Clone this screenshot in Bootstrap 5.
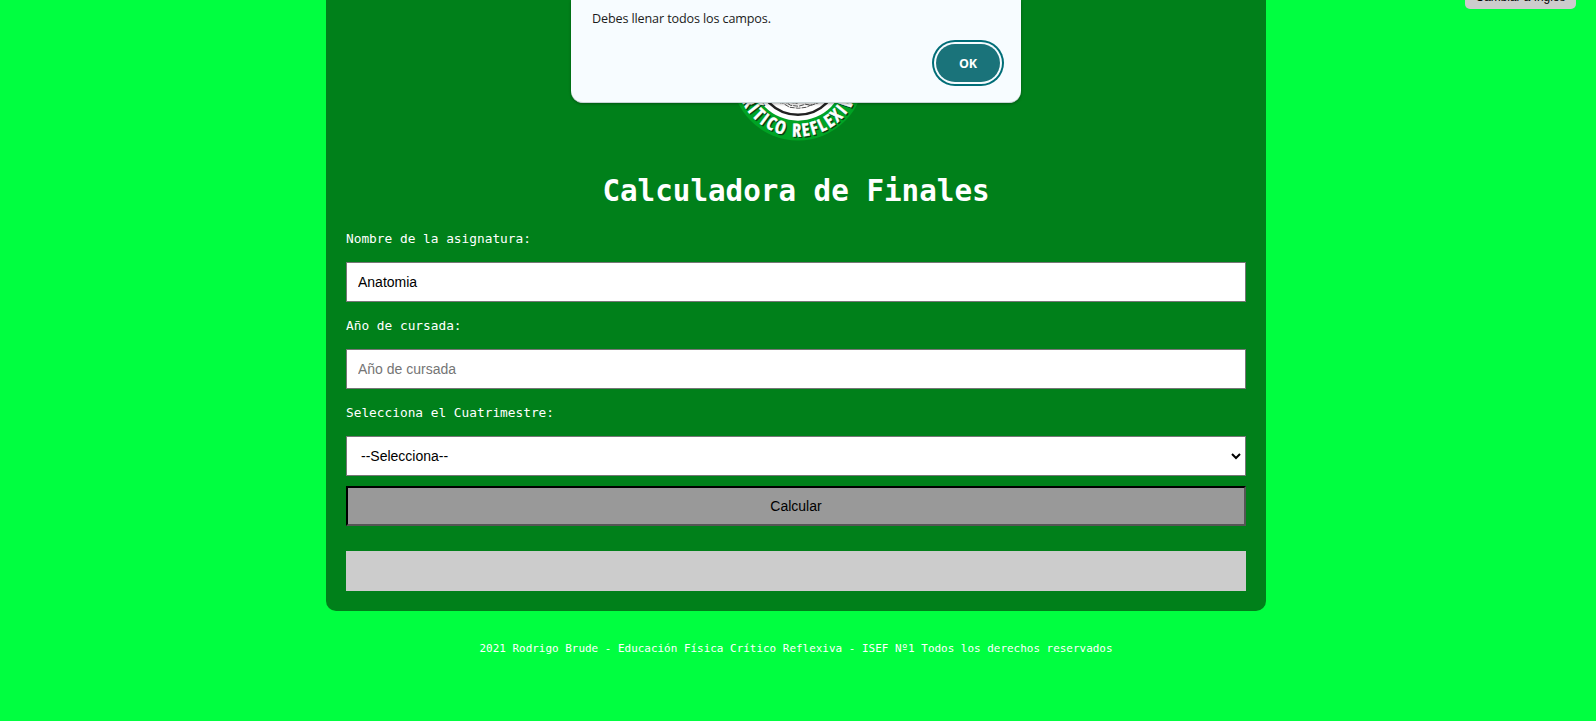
<!DOCTYPE html>
<html lang="es">
<head>
<meta charset="utf-8">
<meta name="viewport" content="width=device-width, initial-scale=1">
<title>Calculadora de Finales</title>
<link href="https://cdn.jsdelivr.net/npm/bootstrap@5.3.0/dist/css/bootstrap.min.css" rel="stylesheet">
<style>
html, body { height: 100%; }
body { background: #00ff40; color: #fff; font-family: "DejaVu Sans Mono", monospace; overflow: hidden; }
.page-wrap { padding-right: 4px; }
.panel { width: 940px; height: 611px; background: #00801a; border-radius: 0 0 10px 10px; padding: 7px 20px 20px; }
.logo { width: 134px; height: 134px; margin-left: 4px; }
h1 { font-size: 29.24px; font-weight: 700; line-height: 38px; margin: 31px 0 20px; }
.field-label { font-size: 12.8px; line-height: 17px; margin: 0 0 15px; }
.field-group { margin-bottom: 15px; }
.field, .calc, .result { height: 40px; border-radius: 0; flex: none; }
.field, .calc, .lang { font-family: "Liberation Sans", Arial, sans-serif; color: #000; }
.field, .field:focus { font-size: 14px; border: 1px solid #767676; padding: 0 11px; color: #000; background-color: #fff; }
.field::placeholder { color: #757575; opacity: 1; }
.form-select.field { padding-left: 14px; background-image: none; }
.chevron { right: 4px; top: 15px; }
.calc, .calc:hover { font-size: 14px; background: #999; color: #000; border: 2px solid; border-color: #000 #555 #555 #000; padding: 0; margin-top: -5px; }
.result { background: #ccc; }
.foot { font-size: 10.96px; line-height: 14px; margin-top: 31px; }
.lang { right: 20px; top: -15px; width: 111px; height: 24px; border-radius: 5px; background: #ccc; font-size: 11.9px; line-height: 25px; }
.alert-box { width: 450px; height: 103px; margin-left: -2px; background: #f7fcff; border-radius: 0 0 12px 12px; color: #1b1b1b; font-family: "Open Sans", "Noto Sans", sans-serif; border-bottom: 1px solid #c8d4d6; box-shadow: 0 1px 3px #0005; }
.alert-text { font-size: 12.6px; line-height: 18px; margin: 10px 0 0 21px; letter-spacing: -.13px; }
.ok, .ok:hover { width: 64px; height: 38px; right: 21px; top: 44px; border: 0; padding: 2px 0 0; border-radius: 19px; background: #1a737a; color: #fff; font-size: 12.5px; font-weight: 700; box-shadow: 0 0 0 2px #f7fcff, 0 0 0 4px #006d77; }
</style>
</head>
<body>
<div class="page-wrap d-flex flex-column align-items-center">
  <main class="panel d-flex flex-column">
    <svg class="logo align-self-center" viewBox="0 0 135 135">
      <circle cx="67.5" cy="67.5" r="67" fill="#00a324"/>
      <circle cx="67.5" cy="67.5" r="47" fill="#fff"/>
      <circle cx="67.5" cy="67.5" r="41" fill="#fff" stroke="#222" stroke-width="2.5"/>
      <path d="M46 95l5 2 4-1 5 3 8 1 7-2 6 1 8-3M54 98l5 3 9 1 8-1 6-3M59 96l7 1 5-2 9 1" fill="none" stroke="#222" stroke-width=".8" stroke-dasharray="5 1"/>
      <path id="arc" d="M4.500 67.500a63 63 0 0 0 126 0" fill="none"/>
      <g font-family="'Liberation Sans Narrow', 'Open Sans Condensed', Roboto, sans-serif" font-weight="700" font-size="18" text-anchor="middle">
        <text fill="#063b10" stroke="#063b10" stroke-width=".5" transform="translate(1.2 1.2)"><textPath href="#arc" startOffset="50%" textLength="162">CRÍTICO REFLEXIVA</textPath></text>
        <text fill="#fff" stroke="#fff" stroke-width=".5"><textPath href="#arc" startOffset="50%" textLength="162">CRÍTICO REFLEXIVA</textPath></text>
      </g>
    </svg>
    <h1 class="text-center">Calculadora de Finales</h1>
    <form class="d-flex flex-column">
      <div class="field-group d-flex flex-column">
        <label class="field-label" for="subject">Nombre de la asignatura:</label>
        <input class="form-control field" id="subject" value="Anatomia">
      </div>
      <div class="field-group d-flex flex-column">
        <label class="field-label" for="year">Año de cursada:</label>
        <input class="form-control field" id="year" placeholder="Año de cursada">
      </div>
      <div class="field-group d-flex flex-column">
        <label class="field-label" for="term">Selecciona el Cuatrimestre:</label>
        <div class="position-relative">
          <select class="form-select field" id="term"><option>--Selecciona--</option></select>
          <svg class="chevron position-absolute" width="12" height="10" viewBox="0 0 12 10"><path d="M2 3l4 4 4-4" fill="none" stroke="#000" stroke-width="2"/></svg>
        </div>
      </div>
      <button class="btn calc" type="button">Calcular</button>
    </form>
    <div class="result mt-auto"></div>
  </main>
  <footer class="foot text-center">2021 Rodrigo Brude - Educación Física Crítico Reflexiva - ISEF Nº1 Todos los derechos reservados</footer>
</div>
<div class="lang position-absolute text-center">Cambiar a Inglés</div>
<div class="alert-box position-absolute top-0 start-50 translate-middle-x" role="alertdialog">
  <p class="alert-text">Debes llenar todos los campos.</p>
  <button class="btn ok position-absolute" type="button">OK</button>
</div>
<script src="https://cdn.jsdelivr.net/npm/bootstrap@5.3.0/dist/js/bootstrap.bundle.min.js"></script>
</body>
</html>
